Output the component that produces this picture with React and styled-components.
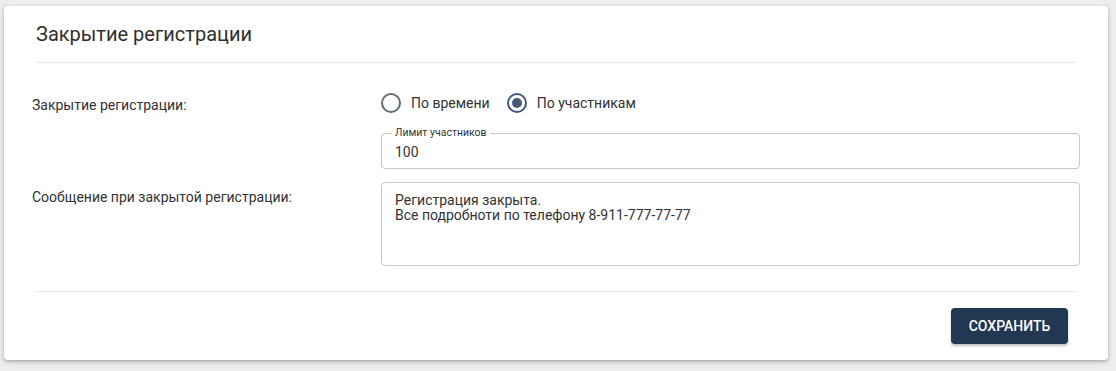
import React, { useState } from "react";
import styled, { createGlobalStyle } from "styled-components";

const Global = createGlobalStyle`
  html, body { margin: 0; padding: 0; background: #ededed; }
  body { font-family: Roboto, "Liberation Sans", Arial, sans-serif; color: #333; }
  * { box-sizing: border-box; }
`;

const Page = styled.div`
  padding: 6px 8px 11px 4px;
`;

const Card = styled.section`
  background: #fff;
  border-radius: 4px;
  box-shadow: 0 2px 5px rgba(0, 0, 0, 0.22), 0 1px 2px rgba(0, 0, 0, 0.12);
  padding: 0 32px 16px;
  height: 354px;
`;

const Header = styled.header`
  padding: 16px 0;
  border-bottom: 1px solid #e8e8e8;
`;

const Title = styled.h2`
  margin: 0;
  font-size: 20px;
  line-height: 24px;
  font-weight: 400;
  color: #2f2f2f;
`;

const Body = styled.div`
  padding: 29px 0 25px;
  border-bottom: 1px solid #e8e8e8;
`;

const Form = styled.div`
  display: grid;
  grid-template-columns: 349px 1fr;
  row-gap: 13px;
  margin: 0 -4px;
`;

const Label = styled.div`
  font-size: 14px;
  line-height: 20px;
  padding-top: ${(p) => p.$top}px;
  color: #333;
`;

const Column = styled.div`
  display: flex;
  flex-direction: column;
`;

const RadioGroup = styled.div`
  display: flex;
  align-items: center;
  height: 22px;
`;

const RadioItem = styled.label`
  display: flex;
  align-items: center;
  gap: 10px;
  margin-right: 17px;
  font-size: 14px;
  line-height: 20px;
  color: #333;
  cursor: pointer;
`;

const RadioCircle = styled.span`
  width: 20px;
  height: 20px;
  border-radius: 50%;
  border: 2px solid ${(p) => (p.$checked ? "#44587a" : "#626c74")};
  display: flex;
  align-items: center;
  justify-content: center;
  &::after {
    content: "";
    width: 10px;
    height: 10px;
    border-radius: 50%;
    background: #44587a;
    display: ${(p) => (p.$checked ? "block" : "none")};
  }
`;

const Outlined = styled.fieldset`
  margin: 13px 0 0;
  padding: 0 13px;
  border: 1px solid #c8c8c8;
  border-radius: 4px;
  height: 42px;
`;

const Legend = styled.legend`
  font-size: 10.5px;
  line-height: 12px;
  padding: 0 3px;
  margin-left: -3px;
  color: #333;
`;

const Input = styled.input`
  border: none;
  outline: none;
  width: 100%;
  height: 28px;
  padding: 0 0 3px;
  font-family: inherit;
  font-size: 14px;
  color: #333;
  background: transparent;
`;

const TextArea = styled.textarea`
  display: block;
  width: 100%;
  height: 84px;
  resize: none;
  border: 1px solid #c8c8c8;
  border-radius: 4px;
  padding: 10px 13px;
  font-family: inherit;
  font-size: 14px;
  line-height: 14.5px;
  color: #333;
  outline: none;
`;

const Footer = styled.div`
  display: flex;
  justify-content: flex-end;
  padding: 16px 8px 0 0;
`;

const Button = styled.button`
  height: 36px;
  width: 117px;
  border: none;
  border-radius: 4px;
  background: #223752;
  color: #fff;
  font-family: inherit;
  font-size: 14px;
  font-weight: 500;
  text-transform: uppercase;
  box-shadow: 0 2px 3px rgba(0, 0, 0, 0.25);
  cursor: pointer;
`;

export default function App() {
  const [mode, setMode] = useState("participants");
  return (
    <>
      <Global />
      <Page>
        <Card>
          <Header>
            <Title>Закрытие регистрации</Title>
          </Header>
          <Body>
            <Form>
              <Label $top={3}>Закрытие регистрации:</Label>
              <Column>
                <RadioGroup>
                  <RadioItem onClick={() => setMode("time")}>
                    <RadioCircle $checked={mode === "time"} />
                    По времени
                  </RadioItem>
                  <RadioItem onClick={() => setMode("participants")}>
                    <RadioCircle $checked={mode === "participants"} />
                    По участникам
                  </RadioItem>
                </RadioGroup>
                <Outlined>
                  <Legend>Лимит участников</Legend>
                  <Input defaultValue="100" />
                </Outlined>
              </Column>
              <Label $top={5}>Сообщение при закрытой регистрации:</Label>
              <TextArea
                defaultValue={"Регистрация закрыта.\nВсе подробноти по телефону 8-911-777-77-77"}
              />
            </Form>
          </Body>
          <Footer>
            <Button>Сохранить</Button>
          </Footer>
        </Card>
      </Page>
    </>
  );
}
